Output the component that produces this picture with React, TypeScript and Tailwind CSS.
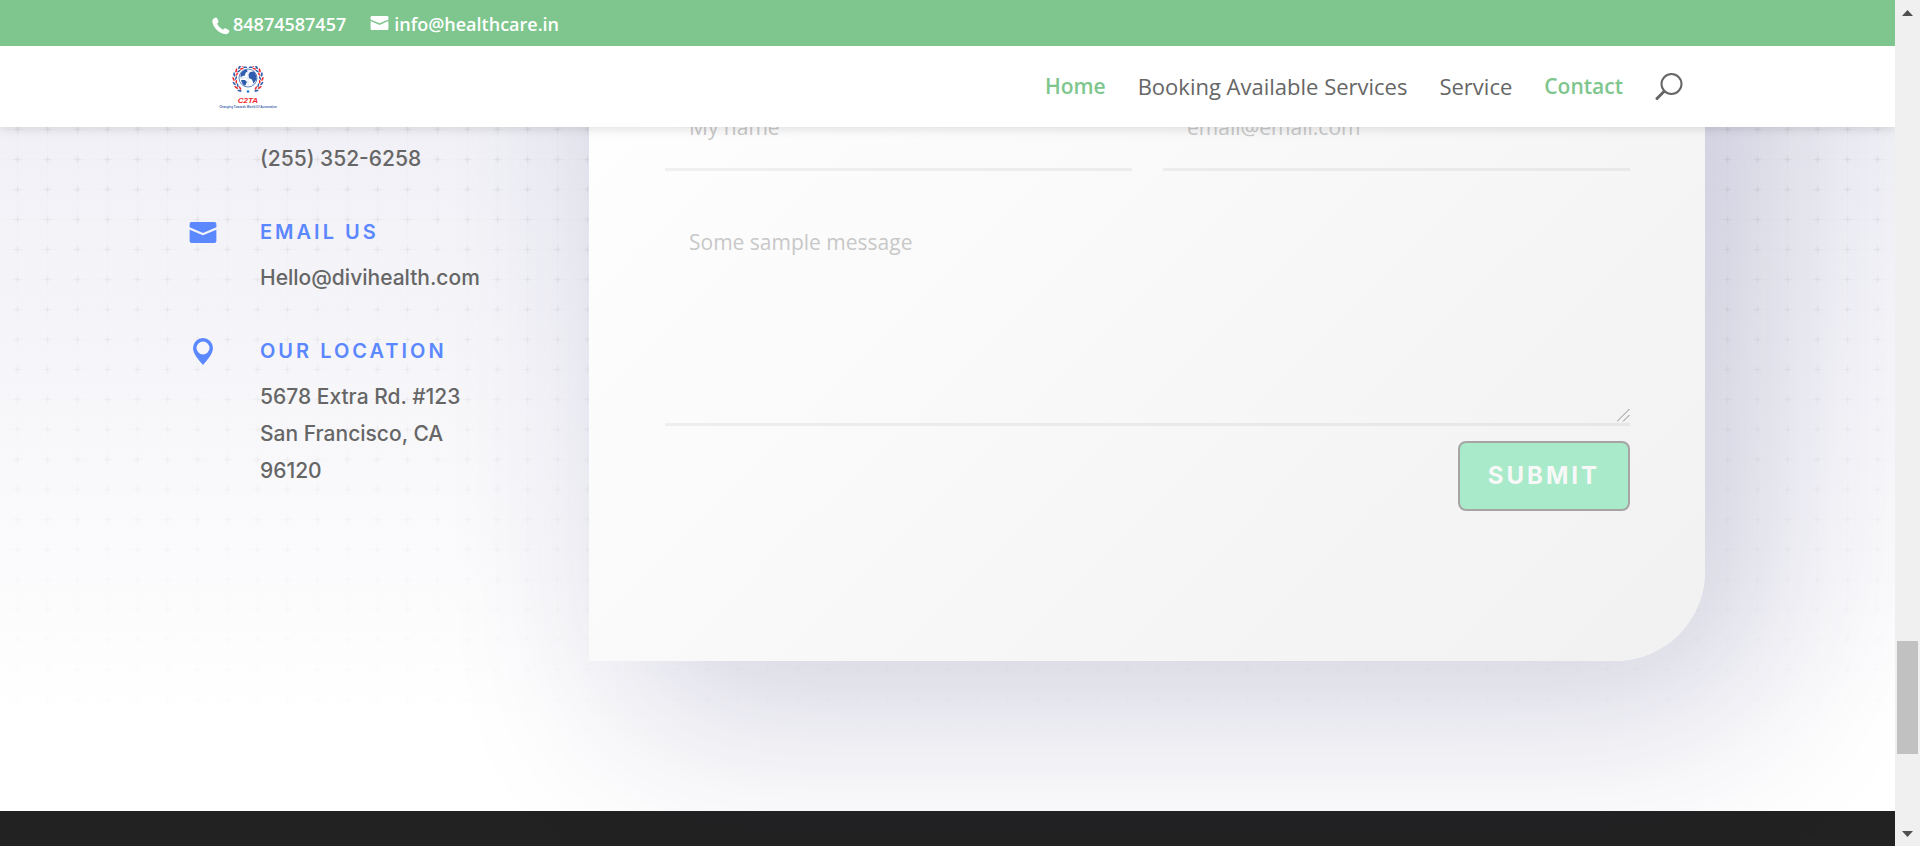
import React from "react";

type IconProps = { className?: string };

function PhoneIcon({ className }: IconProps) {
  return (
    <svg viewBox="0 0 18 18" className={className} fill="currentColor" aria-hidden="true">
      <path d="M3.2.7C4 .3 4.7.5 5.1 1.300l1.200 2.500c.4.8.2 1.400-.4 1.900-.7.600-.8 1.100-.4 1.900a13 13 0 0 0 4.700 4.700c.8.400 1.300.200 1.900-.5.500-.600 1.200-.700 2-.3l2.500 1.400c.8.500 1 1.200.5 2-.8 1.700-2.400 2.500-4.400 2.200C6.600 16.200.900 10 .3 4.500.1 2.800 1.500 1.300 3.200.7z" />
    </svg>
  );
}

function MailIcon({ className }: IconProps) {
  return (
    <svg viewBox="0 0 28 22" className={className} fill="currentColor" aria-hidden="true">
      <path d="M2 0h24a2 2 0 0 1 2 2v3.500L14 11.500 0 5.500V2a2 2 0 0 1 2-2z" />
      <path d="M0 8l14 6L28 8v12a2 2 0 0 1-2 2H2a2 2 0 0 1-2-2z" />
    </svg>
  );
}

function PinIcon({ className }: IconProps) {
  return (
    <svg viewBox="0 0 20 27" className={className} fill="currentColor" aria-hidden="true">
      <path
        fillRule="evenodd"
        d="M10 0a10 10 0 0 1 10 10c0 5.500-5.500 12-10 17C5.500 22 0 15.500 0 10A10 10 0 0 1 10 0zm0 3.500a6.500 6.500 0 1 0 0 13 6.500 6.500 0 0 0 0-13z"
      />
    </svg>
  );
}

function SearchIcon({ className }: IconProps) {
  return (
    <svg viewBox="0 0 28 28" className={className} fill="none" stroke="currentColor" aria-hidden="true">
      <circle cx="16.500" cy="12" r="10" strokeWidth="2" />
      <path d="M9 19.500L2 26.500" strokeWidth="3" strokeLinecap="round" />
    </svg>
  );
}

const leaves = [-162, -144, -126, -108, -90, -72, -54, -36];

function Logo({ className }: IconProps) {
  return (
    <svg viewBox="0 0 60 44" className={className} role="img" aria-label="C2TA">
      {[1, -1].map((side) => (
        <g key={side} transform={`translate(30 13) scale(${side} 1)`}>
          {leaves.map((a, i) => (
            <g key={a} transform={`rotate(${a})`}>
              <ellipse cx="0" cy="14.500" rx="2.200" ry="0.900" fill={i % 2 ? "#2f5cad" : "#ee2b2f"} transform="rotate(22 0 14.500)" />
              <ellipse cx="1" cy="12" rx="2" ry="0.800" fill={i % 2 ? "#ee2b2f" : "#2f5cad"} transform="rotate(-22 1 12)" />
            </g>
          ))}
        </g>
      ))}
      <circle cx="30" cy="12" r="9" fill="#fff" stroke="#4b74ba" strokeWidth="0.900" />
      <path d="M30 3v18M21 12h18M26 4q-4 8 0 16M34 4q4 8 0 16" stroke="#b9c8e3" strokeWidth="0.500" fill="none" />
      <path d="M22.500 7.500q2.500-4 6.500-4l.5 2-2 1.500-.5 2.500-2.500.500-2 1.500zM32 6l4-.5q3 3 2.500 8l-3 4-1.500-4-3-1.500-.5-3.500zM23 14l4 0 2 2-2 4q-3-1.500-4-6z" fill="#2f5cad" />
      <circle cx="30" cy="25.500" r="1.300" fill="#1b7ad0" />
      <text x="30" y="37" textAnchor="middle" fontSize="8" fontStyle="italic" fontWeight="700" fontFamily="Liberation Sans, sans-serif" fill="#ee2b2f">C2TA</text>
      <text x="30" y="42" textAnchor="middle" fontSize="3" fontWeight="700" fontFamily="Liberation Sans, sans-serif" fill="#4768ad">Changing Towards World Of Automation</text>
    </svg>
  );
}

function Header() {
  return (
    <header className="absolute inset-x-0 top-0 z-10 bg-white font-['Open_Sans',sans-serif] shadow-[0_2px_10px_rgba(0,0,0,0.12)]">
      <div className="bg-[#7ec68e]">
        <div className="mx-[212px] flex h-[46px] items-center text-lg font-semibold text-white">
          <a href="tel:84874587457" className="flex items-center gap-[3px] pt-0.5">
            <PhoneIcon className="mt-1 size-[18px]" />
            84874587457
          </a>
          <a href="mailto:info@healthcare.in" className="ml-6 flex items-center gap-[5px] pt-0.5">
            <MailIcon className="mb-0.5 h-[14px] w-[19px]" />
            info@healthcare.in
          </a>
        </div>
      </div>
      <div className="mx-[212px] flex h-[81px] items-center justify-between">
        <a href="#home" className="ml-1.5 pt-0.5">
          <Logo className="h-[44px] w-[60px]" />
        </a>
        <nav className="flex items-center gap-8 pb-0.5 text-[22px] leading-7 font-medium text-[#666]">
          <a href="#home" className="text-[21px] font-semibold text-[#7ec68e]">Home</a>
          <a href="#booking">Booking Available Services</a>
          <a href="#service">Service</a>
          <a href="#contact" className="text-[21px] font-semibold text-[#7ec68e]">Contact</a>
          <button type="button" aria-label="Search">
            <SearchIcon className="size-7" />
          </button>
        </nav>
      </div>
    </header>
  );
}

type DetailProps = { icon: React.ReactNode; title: string; children: React.ReactNode };

function Detail({ icon, title, children }: DetailProps) {
  return (
    <div className="flex">
      <div className="flex h-[26px] w-[70px] shrink-0 items-center">
        <div className="flex w-[26px] justify-center text-[#5b87ff]">{icon}</div>
      </div>
      <div>
        <h4 className="text-xl leading-[26px] font-semibold tracking-[3px] text-[#5b87ff]">{title}</h4>
        <p className="mt-3.5">{children}</p>
      </div>
    </div>
  );
}

function ContactDetails() {
  return (
    <address className="flex w-[399px] shrink-0 flex-col gap-[42px] pt-[440px] font-[Inter,sans-serif] text-[21px] leading-[37px] font-medium text-[#666] not-italic">
      <p className="pl-[70px]">(255) 352-6258</p>
      <Detail icon={<MailIcon className="h-[21px] w-7 shrink-0" />} title="EMAIL US">
        Hello@divihealth.com
      </Detail>
      <Detail icon={<PinIcon className="h-[27px] w-5" />} title="OUR LOCATION">
        5678 Extra Rd. #123
        <br />
        San Francisco, CA
        <br />
        96120
      </Detail>
    </address>
  );
}

const field =
  "block w-full rounded-none border-b-[3px] border-black/5 bg-transparent px-6 text-[21px] leading-7 text-[#666] outline-none placeholder:text-[#c8c8c8] placeholder:opacity-100";

function ContactForm() {
  return (
    <form className="flex-1 rounded-br-[90px] bg-linear-135 from-white from-15% to-[#f1f1f1] pt-[381px] pr-[75px] pb-[150px] pl-[76px] font-['Open_Sans',sans-serif] shadow-[50px_50px_180px_10px_rgba(30,30,100,0.19)]">
      <div className="grid grid-cols-2 gap-[31px]">
        <input aria-label="Name" placeholder="My name" className={`${field} h-[90px] pt-1`} />
        <input aria-label="Email" type="email" placeholder="email@email.com" className={`${field} h-[90px] pt-1`} />
      </div>
      <div className="relative mt-[31px]">
        <textarea
          aria-label="Message"
          placeholder="Some sample message"
          className={`${field} h-[224px] resize-none pt-[26px]`}
        />
        <svg
          viewBox="0 0 13 13"
          className="pointer-events-none absolute right-0 bottom-1 size-[13px]"
          stroke="#8c8c8c"
          aria-hidden="true"
        >
          <path d="M0 12.500L12.500 0M6 12.500L12.500 6" />
        </svg>
      </div>
      <div className="mt-[15px] flex justify-end">
        <button
          type="submit"
          className="h-[70px] rounded-lg border-2 border-[#a5a5a5] bg-[#a8eac9] px-7 font-[Inter,sans-serif] text-2xl font-bold tracking-[3px] text-[#f8f8f8]"
        >
          SUBMIT
        </button>
      </div>
    </form>
  );
}

function PlusPattern() {
  return (
    <svg className="absolute inset-0 size-full" aria-hidden="true">
      <defs>
        <pattern id="plus" width="30" height="30" patternUnits="userSpaceOnUse">
          <path d="M17.500 0v30M0 9.500h30" stroke="#000" strokeOpacity="0.006" />
          <path d="M17.500 5v9M13 9.500h9" stroke="#222" strokeOpacity="0.03" />
          <path d="M17.500 7v5M15 9.500h5" stroke="#222" strokeOpacity="0.025" strokeWidth="3" />
        </pattern>
        <linearGradient id="fade" x1="0" y1="0" x2="0" y2="1">
          <stop offset="0.400" stopColor="#fff" />
          <stop offset="0.960" stopColor="#000" />
        </linearGradient>
        <mask id="fadeMask">
          <rect width="100%" height="100%" fill="url(#fade)" />
        </mask>
      </defs>
      <rect width="100%" height="100%" fill="url(#plus)" mask="url(#fadeMask)" />
    </svg>
  );
}

function Scrollbar() {
  return (
    <div className="flex w-[25px] shrink-0 flex-col items-center bg-[#f0f0f0]" aria-hidden="true">
      <svg viewBox="0 0 25 25" className="size-[25px]" fill="#505050">
        <path d="M7 16l5.500-6 5.500 6z" />
      </svg>
      <div className="w-full flex-[616]" />
      <div className="h-[113px] w-[21px] bg-[#c1c1c1]" />
      <div className="w-full flex-[67]" />
      <svg viewBox="0 0 25 25" className="size-[25px]" fill="#505050">
        <path d="M7 10l5.500 6 5.500-6z" />
      </svg>
    </div>
  );
}

export default function App() {
  return (
    <div className="flex h-screen overflow-hidden bg-white">
      <div className="relative flex min-w-0 flex-1 flex-col overflow-hidden">
        <Header />
        <main className="relative -mt-[300px] bg-linear-to-b from-[#eeeef5] from-30% to-white to-92%">
          <PlusPattern />
          <div className="relative mx-[190px] flex pb-[150px]">
            <ContactDetails />
            <ContactForm />
          </div>
        </main>
        <footer className="flex-1 bg-[#222]" />
      </div>
      <Scrollbar />
    </div>
  );
}
